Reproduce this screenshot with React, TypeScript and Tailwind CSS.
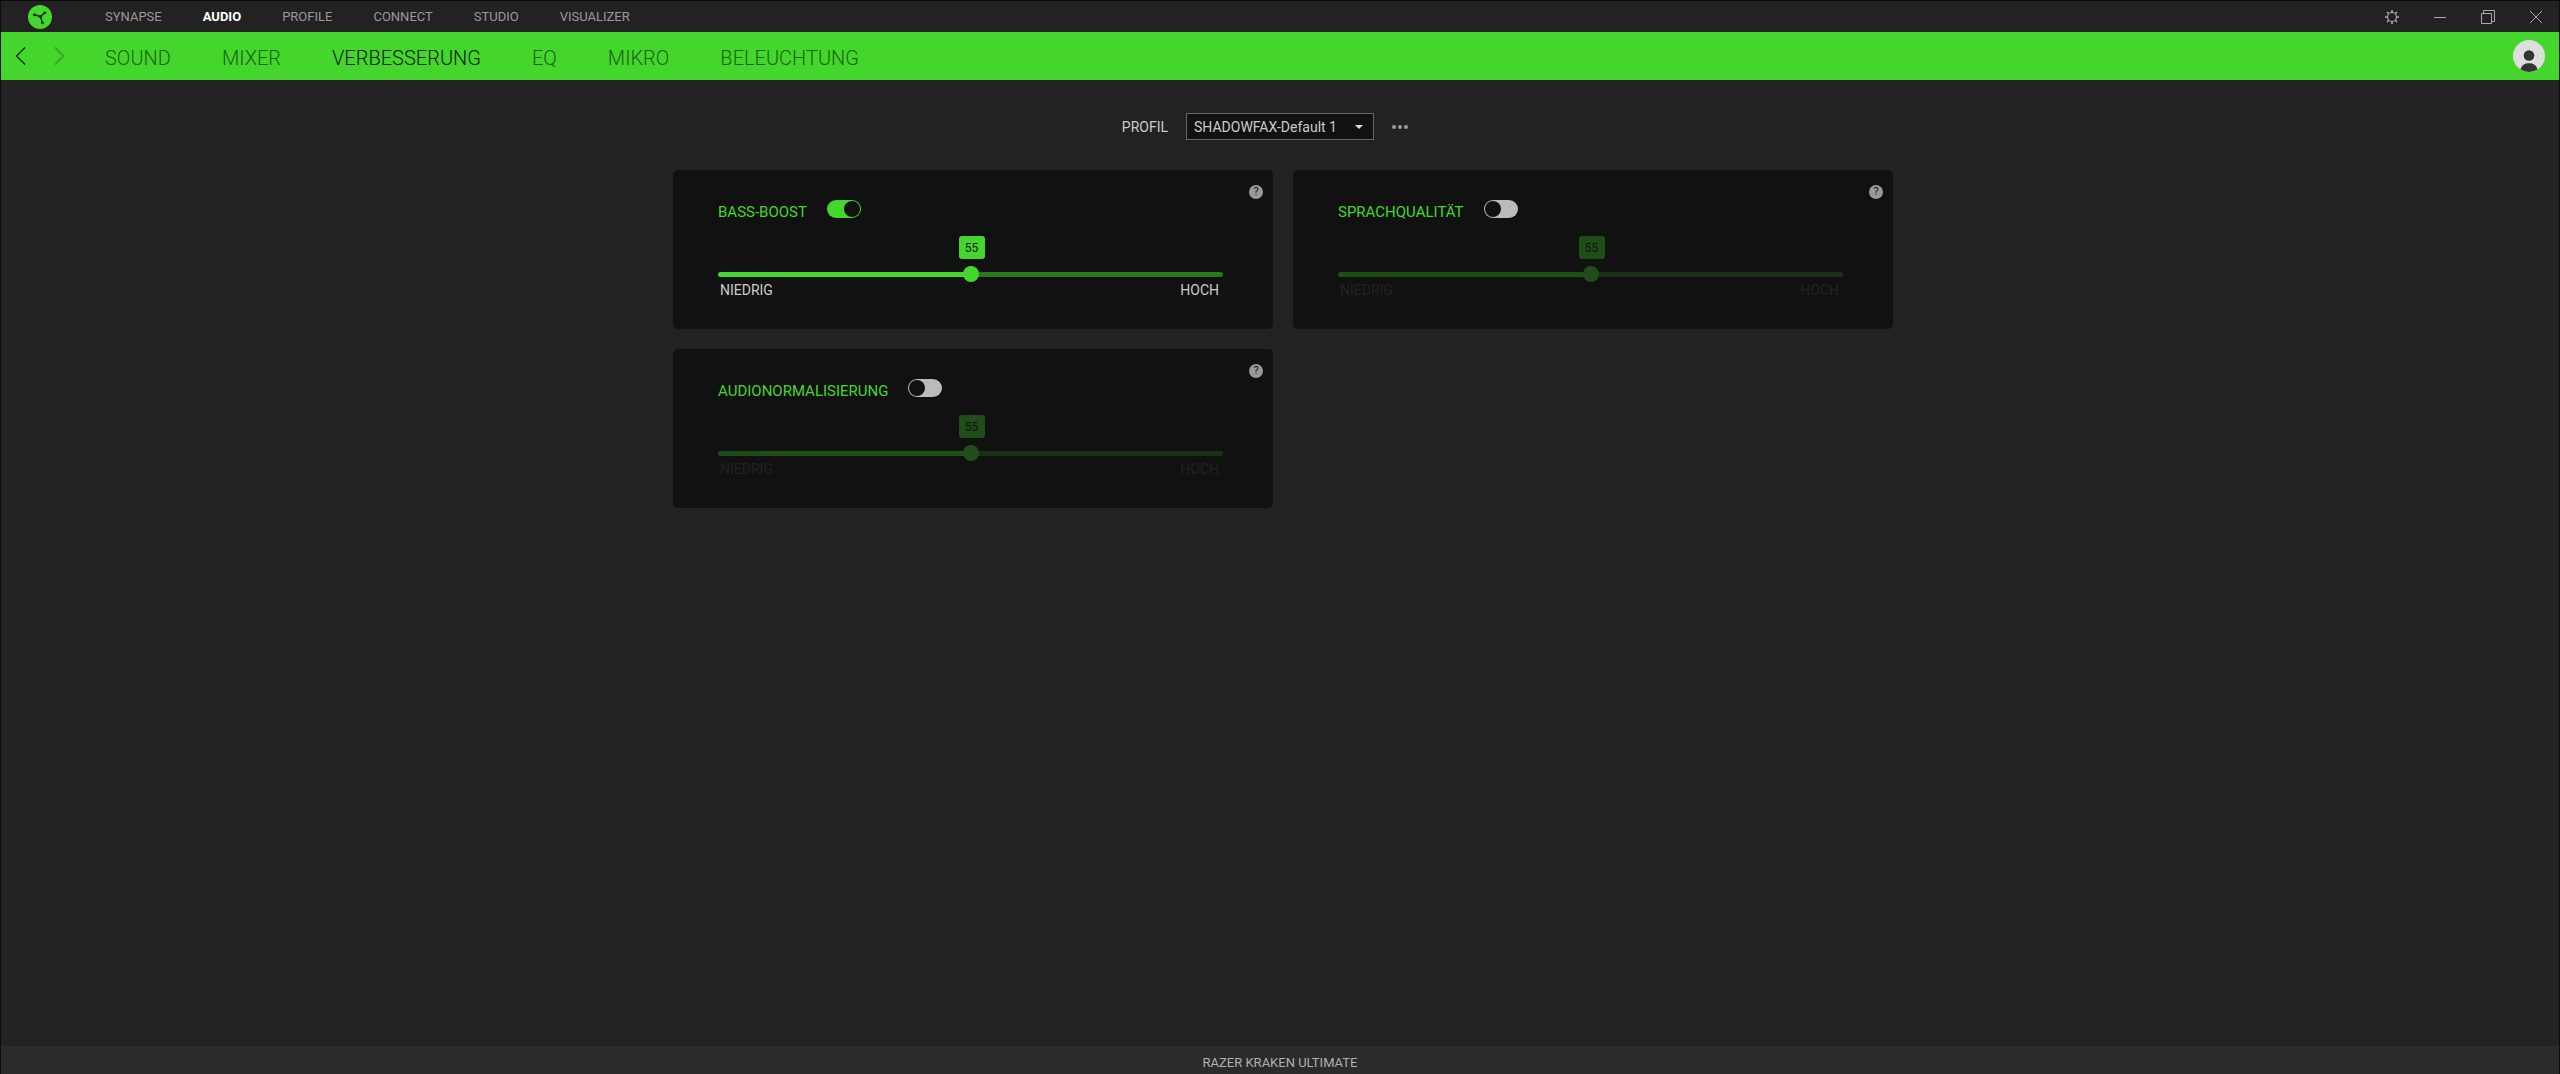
import { useId, useState } from "react";

const MAIN_TABS = ["SYNAPSE", "AUDIO", "PROFILE", "CONNECT", "STUDIO", "VISUALIZER"];
const SUB_TABS = ["SOUND", "MIXER", "VERBESSERUNG", "EQ", "MIKRO", "BELEUCHTUNG"];

const LEVEL_MIN = 10;
const LEVEL_MAX = 100;

type Enhancement = { title: string; enabled: boolean; level: number };

const ENHANCEMENTS: Enhancement[] = [
  { title: "BASS-BOOST", enabled: true, level: 55 },
  { title: "SPRACHQUALITÄT", enabled: false, level: 55 },
  { title: "AUDIONORMALISIERUNG", enabled: false, level: 55 },
];

export default function App() {
  return (
    <div className="flex min-h-screen flex-col border-x border-t border-[#0c0c0c] bg-[#222222] font-['Roboto','Liberation_Sans',sans-serif] text-[#cccccc]">
      <TitleBar />
      <DeviceBar />
      <main className="flex-1 pt-[33px]">
        <ProfileRow />
        <div className="ml-[6px] mt-[30px] flex justify-center">
          <div className="grid w-full max-w-[1220px] grid-cols-1 gap-5 lg:grid-cols-2">
            {ENHANCEMENTS.map((e) => (
              <EnhancementCard key={e.title} {...e} />
            ))}
          </div>
        </div>
      </main>
      <footer className="h-7 bg-[#2b2b2b] pt-px text-center text-[13px] leading-8 text-[#b0b0b0]">
        RAZER KRAKEN ULTIMATE
      </footer>
    </div>
  );
}

function TitleBar() {
  return (
    <header className="flex h-[31px] items-center justify-between pl-[27px] pr-4">
      <div className="flex items-center">
        <LogoIcon />
        <nav className="ml-[53px] flex gap-[41px] text-[13px]" aria-label="Module">
          {MAIN_TABS.map((tab) => (
            <a
              key={tab}
              href="#"
              className={tab === "AUDIO" ? "font-bold text-white" : "text-[#999999]"}
            >
              {tab}
            </a>
          ))}
        </nav>
      </div>
      <div className="flex items-center gap-[34px] text-[#aaaaaa]">
        <button type="button" aria-label="Einstellungen">
          <GearIcon />
        </button>
        <button type="button" aria-label="Minimieren">
          <svg width="14" height="14" viewBox="0 0 14 14" stroke="currentColor">
            <path d="M1 7.500h12" />
          </svg>
        </button>
        <button type="button" aria-label="Wiederherstellen">
          <svg width="14" height="14" viewBox="0 0 14 14" fill="none" stroke="currentColor">
            <path d="M.5 3.500h10v10h-10zM2.500 3.500v-3h11v11h-3" />
          </svg>
        </button>
        <button type="button" aria-label="Schließen">
          <svg width="14" height="14" viewBox="0 0 14 14" stroke="currentColor">
            <path d="M1 1l12 12M13 1L1 13" />
          </svg>
        </button>
      </div>
    </header>
  );
}

function DeviceBar() {
  return (
    <div className="flex h-12 items-center bg-[#44d62c] px-[14px]">
      <button type="button" aria-label="Zurück" className="text-[#0f2e0b]">
        <svg width="12" height="20" viewBox="0 0 12 20" fill="none" stroke="currentColor" strokeWidth="1.300">
          <path d="M10 1.500L1.500 10l8.500 8.500" />
        </svg>
      </button>
      <button type="button" aria-label="Vor" disabled className="ml-[26px] text-[#319a20]">
        <svg width="12" height="20" viewBox="0 0 12 20" fill="none" stroke="currentColor" strokeWidth="1.300">
          <path d="M2 1.500l8.500 8.500L2 18.500" />
        </svg>
      </button>
      <nav
        className="ml-10 flex flex-1 gap-[51px] pt-[3px] text-xl font-light"
        aria-label="Gerät"
      >
        {SUB_TABS.map((tab) => (
          <a
            key={tab}
            href="#"
            className={tab === "VERBESSERUNG" ? "text-[#081a06]" : "text-[#1c6413]"}
          >
            {tab}
          </a>
        ))}
      </nav>
      <button type="button" aria-label="Konto">
        <svg width="32" height="32" viewBox="0 0 32 32">
          <circle cx="16" cy="16" r="16" fill="#dddddd" />
          <circle cx="16" cy="15.500" r="5.300" fill="#333333" />
          <path
            d="M7.500 29.500c1-4.500 4.500-6.300 8.500-6.300s7.500 1.800 8.500 6.300A16 16 0 0 1 16 32a16 16 0 0 1-8.500-2.500z"
            fill="#333333"
          />
        </svg>
      </button>
    </div>
  );
}

function ProfileRow() {
  return (
    <div className="grid grid-cols-[1fr_auto_1fr] items-center gap-[18px]">
      <label htmlFor="profile" className="text-right text-sm">
        PROFIL
      </label>
      <div className="relative">
        <select
          id="profile"
          className="block h-[27px] w-[188px] appearance-none border border-[#666666] bg-[#111111] pl-[7px] pr-8 text-sm text-[#cccccc]"
        >
          <option>SHADOWFAX-Default 1</option>
        </select>
        <svg
          className="pointer-events-none absolute right-[11px] top-3"
          width="8"
          height="4"
          viewBox="0 0 8 4"
        >
          <path d="M0 0h8L4 4z" fill="#dddddd" />
        </svg>
      </div>
      <button type="button" aria-label="Weitere Optionen" className="justify-self-start">
        <svg width="16" height="4" viewBox="0 0 16 4" fill="#999999">
          <circle cx="2" cy="2" r="2" />
          <circle cx="8" cy="2" r="2" />
          <circle cx="14" cy="2" r="2" />
        </svg>
      </button>
    </div>
  );
}

function EnhancementCard({ title, enabled, level }: Enhancement) {
  const id = useId();
  const [on, setOn] = useState(enabled);
  const [value, setValue] = useState(level);
  const pct = ((value - LEVEL_MIN) / (LEVEL_MAX - LEVEL_MIN)) * 100;

  return (
    <section className="relative rounded-[5px] bg-[#111111] pb-[30px] pl-[45px] pr-[50px] pt-[30px]">
      <button
        type="button"
        aria-label={`Hilfe zu ${title}`}
        className="absolute right-[10px] top-[15px] size-[14px] rounded-full bg-[#999999] text-center text-[11px] leading-[14px] text-[#111111]"
      >
        ?
      </button>
      <div className="flex h-6 items-start gap-5">
        <label htmlFor={`${id}-on`} className="text-[15px] leading-6 text-[#44d62c]">
          {title}
        </label>
        <input
          id={`${id}-on`}
          type="checkbox"
          role="switch"
          checked={on}
          onChange={(e) => setOn(e.target.checked)}
          className="flex h-[18px] w-[34px] appearance-none rounded-full bg-[#bbbbbb] p-px before:size-4 before:rounded-full before:bg-[#111111] checked:justify-end checked:bg-[#44d62c]"
        />
      </div>
      <div className={on ? "mt-3" : "mt-3 opacity-30"}>
        {/* value bubble follows the thumb */}
        <div className="h-[23px]">
          <output
            htmlFor={`${id}-level`}
            className="relative ml-px block h-[23px] w-[26px] -translate-x-1/2 rounded-[3px] bg-[#44d62c] text-center text-xs leading-6 text-[#111111]"
            style={{ left: `${pct}%` }}
          >
            {value}
          </output>
        </div>
        <input
          id={`${id}-level`}
          type="range"
          aria-label={title}
          min={LEVEL_MIN}
          max={LEVEL_MAX}
          value={value}
          disabled={!on}
          onChange={(e) => setValue(Number(e.target.value))}
          style={{
            backgroundImage: `linear-gradient(to right, #44d62c ${pct}%, #2a7a1c ${pct}%)`,
          }}
          className="mb-1 mt-[13px] block h-[5px] w-full appearance-none rounded-full [&::-webkit-slider-thumb]:mt-[-2px] [&::-webkit-slider-thumb]:size-4 [&::-webkit-slider-thumb]:appearance-none [&::-webkit-slider-thumb]:rounded-full [&::-webkit-slider-thumb]:bg-[#44d62c]"
        />
      </div>
      <div
        className={`flex justify-between pl-[2px] pr-1 text-sm leading-[18px] ${
          on ? "text-[#cccccc]" : "text-[#222222]"
        }`}
      >
        <span>NIEDRIG</span>
        <span>HOCH</span>
      </div>
    </section>
  );
}

function LogoIcon() {
  return (
    <svg width="24" height="24" viewBox="0 0 24 24">
      <circle cx="12" cy="12" r="12" fill="#44d62c" />
      <g stroke="#14300f" fill="#14300f" strokeLinecap="round">
        <path
          d="M12.500 11.500L6.500 9.800M12.500 11.500L16.500 8M12.500 11.500L14.300 17.500"
          strokeWidth="1.500"
        />
        <circle cx="12.500" cy="11.800" r="1.200" />
        <circle cx="6.300" cy="9.800" r="1" />
        <circle cx="16.800" cy="7.800" r="1" />
        <circle cx="14.400" cy="17.700" r="1" />
      </g>
    </svg>
  );
}

function GearIcon() {
  return (
    <svg width="14" height="14" viewBox="0 0 14 14" fill="none" stroke="currentColor">
      <circle cx="7" cy="7" r="4.500" strokeWidth="1.200" />
      <path
        d="M7 0v2.500M7 11.500V14M0 7h2.500M11.500 7H14M2 2l1.800 1.800M10.200 10.200L12 12M12 2l-1.800 1.800M3.800 10.200L2 12"
        strokeWidth="1.600"
      />
    </svg>
  );
}
